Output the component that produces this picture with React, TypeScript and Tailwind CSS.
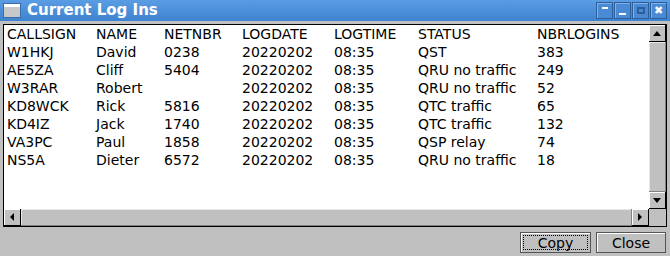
const rows = [
  ['W1HKJ', 'David', '0238', '20220202', '08:35', 'QST', '383'],
  ['AE5ZA', 'Cliff', '5404', '20220202', '08:35', 'QRU no traffic', '249'],
  ['W3RAR', 'Robert', '', '20220202', '08:35', 'QRU no traffic', '52'],
  ['KD8WCK', 'Rick', '5816', '20220202', '08:35', 'QTC traffic', '65'],
  ['KD4IZ', 'Jack', '1740', '20220202', '08:35', 'QTC traffic', '132'],
  ['VA3PC', 'Paul', '1858', '20220202', '08:35', 'QSP relay', '74'],
  ['NS5A', 'Dieter', '6572', '20220202', '08:35', 'QRU no traffic', '18'],
];

const header = ['CALLSIGN', 'NAME', 'NETNBR', 'LOGDATE', 'LOGTIME', 'STATUS', 'NBRLOGINS'];
const widths = ['w-[89px]', 'w-[68px]', 'w-[78px]', 'w-[92px]', 'w-[84px]', 'w-[119px]', 'w-[100px]'];

function Row({ cells }: { cells: string[] }) {
  return (
    <div className="flex h-[18px] items-center whitespace-nowrap">
      {cells.map((c, i) => (
        <div key={i} className={`${widths[i]} shrink-0`}>
          {c}
        </div>
      ))}
    </div>
  );
}

function WinButton({ children }: { children: React.ReactNode }) {
  return (
    <div className="flex h-[17px] w-[17px] items-center justify-center border border-[#2c5f99] bg-[#4a8ad4] shadow-[inset_1px_1px_0_#7fb2e8]">
      {children}
    </div>
  );
}

function Arrow({ dir }: { dir: 'up' | 'down' | 'left' | 'right' }) {
  const pts = {
    up: '1,8 5,3 9,8',
    down: '1,3 9,3 5,8',
    left: '7,1 7,9 3,5',
    right: '3,1 3,9 7,5',
  }[dir];
  return (
    <svg width="10" height="10" viewBox="0 0 10 10">
      <polygon points={pts} fill="#000" />
    </svg>
  );
}

export default function App() {
  return (
    <div className="flex h-[256px] w-[670px] flex-col bg-[#c0c0c0] font-['DejaVu_Sans',sans-serif] text-[14px] text-black">
      {/* title bar */}
      <div className="flex h-[21px] items-center bg-gradient-to-b from-[#5a9de3] to-[#3f82cf] pl-[3px] pr-[3px]">
        <div className="h-[15px] w-[18px] border border-[#3a6ea8] bg-[#c8c8c8] shadow-[inset_0_3px_0_#ffffff]" />
        <div className="ml-[6px] flex-1 text-[15px] font-bold text-white">Current Log Ins</div>
        <div className="flex gap-[1px]">
          <WinButton>
            <div className="mb-[5px] h-[2px] w-[6px] bg-white" />
          </WinButton>
          <WinButton>
            <div className="mt-[6px] h-[2px] w-[7px] bg-white" />
          </WinButton>
          <WinButton>
            <div className="h-[7px] w-[8px] border-2 border-[#2c5f99]" />
          </WinButton>
          <WinButton>
            <span className="text-[11px] font-bold leading-none text-white">✖</span>
          </WinButton>
        </div>
      </div>

      {/* list */}
      <div className="mx-[3px] mt-[3px] flex h-[203px] flex-col border border-black bg-white">
        <div className="flex min-h-0 flex-1">
          <div className="flex-1 overflow-hidden pl-[3px]">
            <Row cells={header} />
            {rows.map((r, i) => (
              <Row key={i} cells={r} />
            ))}
          </div>
          {/* vertical scrollbar */}
          <div className="flex w-[17px] flex-col bg-[#c0c0c0]">
            <div className="flex h-[17px] items-center justify-center border-b border-r border-black bg-[#c0c0c0] shadow-[inset_1px_1px_0_#ffffff]">
              <Arrow dir="up" />
            </div>
            <div className="flex-1 border-b border-r border-[#808080] shadow-[inset_1px_1px_0_#e8e8e8]" />
            <div className="flex h-[17px] items-center justify-center border-b border-r border-black shadow-[inset_1px_1px_0_#ffffff]">
              <Arrow dir="down" />
            </div>
          </div>
        </div>
        {/* horizontal scrollbar */}
        <div className="flex h-[17px] bg-[#c0c0c0]">
          <div className="flex w-[17px] items-center justify-center border-b border-r border-black shadow-[inset_1px_1px_0_#ffffff]">
            <Arrow dir="left" />
          </div>
          <div className="flex-1 border-b border-r border-[#808080] shadow-[inset_1px_1px_0_#e8e8e8]" />
          <div className="flex w-[17px] items-center justify-center border-b border-r border-black shadow-[inset_1px_1px_0_#ffffff]">
            <Arrow dir="right" />
          </div>
          <div className="w-[17px]" />
        </div>
      </div>

      {/* buttons */}
      <div className="mt-[5px] flex justify-end gap-[5px] pr-[4px]">
        <button className="flex h-[21px] w-[71px] items-stretch border border-[#555] bg-[#c0c0c0] p-[2px] text-[14px] shadow-[inset_1px_1px_0_#ffffff]">
          <span className="flex flex-1 items-center justify-center border border-dotted border-black leading-none">
            Copy
          </span>
        </button>
        <button className="h-[21px] w-[70px] border border-[#555] bg-[#c0c0c0] text-[14px] shadow-[inset_1px_1px_0_#ffffff]">
          Close
        </button>
      </div>
    </div>
  );
}
